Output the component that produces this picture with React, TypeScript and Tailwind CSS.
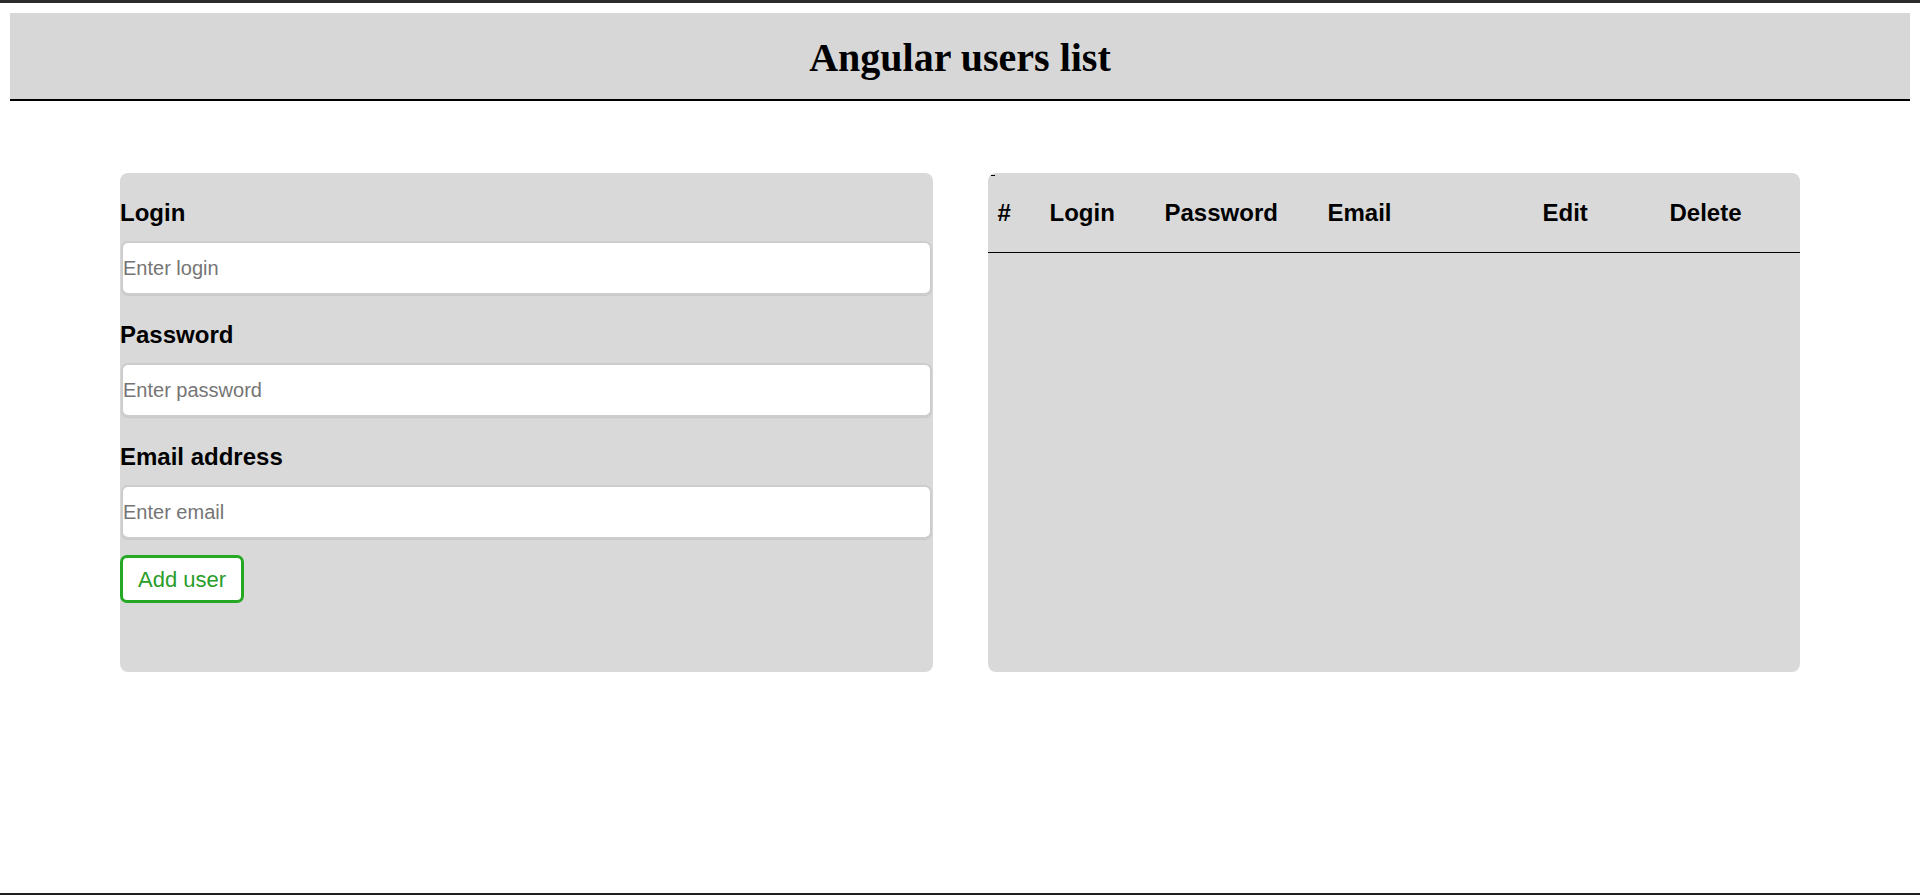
const columns = ["#", "Login", "Password", "Email", "Edit", "Delete"];

const fields = [
  { label: "Login", placeholder: "Enter login", type: "text" },
  { label: "Password", placeholder: "Enter password", type: "password" },
  { label: "Email address", placeholder: "Enter email", type: "email" },
];

export default function App() {
  return (
    <div className="flex h-[895px] flex-col bg-white font-['Liberation_Sans',Arial,sans-serif] text-black">
      <div className="h-[3px] bg-[#2b2b2b]" />

      <header className="mx-[10px] mt-[10px] flex h-[88px] items-center justify-center border-b-2 border-black bg-[#d7d7d7] pt-[4px]">
        <h1 className="font-['Liberation_Serif','Times_New_Roman',serif] text-[40px] font-bold leading-none">
          Angular users list
        </h1>
      </header>

      <main className="mt-[72px] grid grid-cols-2 gap-[55px] px-[120px]">
        <form className="flex flex-col rounded-lg bg-[#d9d9d9] pt-[26px] pb-[69px]" onSubmit={(e) => e.preventDefault()}>
          {fields.map((field, index) => (
            <div key={field.label} className={index > 0 ? "mt-[26px]" : ""}>
              <label className="block text-[24px] font-bold leading-[28px]">{field.label}</label>
              <input
                type={field.type}
                placeholder={field.placeholder}
                className="mx-px mt-[14px] block h-[54px] w-[calc(100%-2px)] rounded-[7px] border-2 border-[#cdcdcd] bg-white px-0 text-[20px] shadow-[0_1px_1px_rgba(0,0,0,0.08)] placeholder:text-[#757575] focus:outline-none"
              />
            </div>
          ))}
          <button
            type="submit"
            className="mt-[16px] h-[48px] w-[124px] rounded-[7px] border-[3px] border-[#25a925] bg-white text-[22px] text-[#2a9d2a]"
          >
            Add user
          </button>
        </form>

        <section className="relative rounded-lg bg-[#d9d9d9]">
          <div className="absolute left-[3px] top-[2px] h-px w-[4px] bg-black" />
          <div className="grid h-[80px] grid-cols-[52px_115px_163px_215px_127px_1fr] items-center border-b border-black pl-[10px] text-[24px] font-bold">
            {columns.map((col) => (
              <span key={col}>{col}</span>
            ))}
          </div>
        </section>
      </main>

      <div className="flex-1" />
      <div className="h-[2px] bg-[#1f1f1f]" />
    </div>
  );
}
